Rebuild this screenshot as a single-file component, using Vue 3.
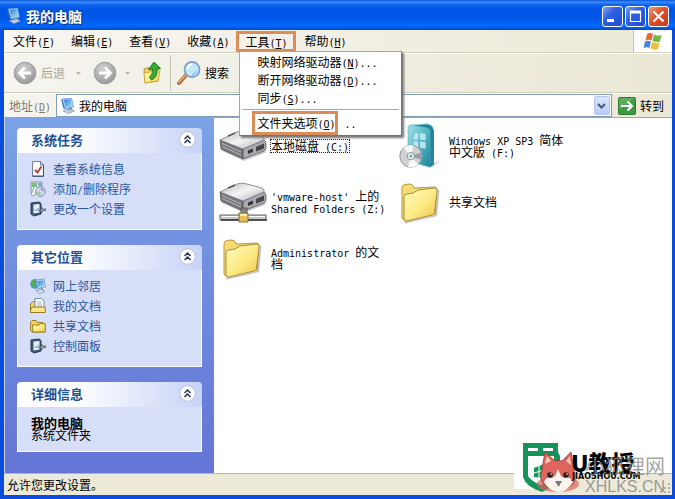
<script setup>
import { h } from 'vue'

// Splits a label into CJK and Latin runs; "&" marks the underlined access key.
const Label = (props) =>
  h('span', { class: 'xp-label' },
    props.text.split(/([\x20-\x7e]+)/).filter(Boolean).map((run) => {
      if (!/^[\x20-\x7e]/.test(run)) return run
      const i = run.indexOf('&')
      if (i < 0) return h('span', { class: 'xp-latin' }, run)
      return h('span', { class: 'xp-latin' }, [run.slice(0, i), h('u', run[i + 1]), run.slice(i + 2)])
    })
  )
Label.props = ['text']

const menusBefore = ['文件(&F)', '编辑(&E)', '查看(&V)', '收藏(&A)']
const toolItems = ['映射网络驱动器(&N)...', '断开网络驱动器(&D)...', '同步(&S)...']
const tasks = [
  { icon: 'info', text: '查看系统信息' },
  { icon: 'programs', text: '添加/删除程序' },
  { icon: 'settings', text: '更改一个设置' }
]
const places = [
  { icon: 'network', text: '网上邻居' },
  { icon: 'docs', text: '我的文档' },
  { icon: 'folder', text: '共享文档' },
  { icon: 'settings', text: '控制面板' }
]
const panels = [
  { title: '系统任务', links: tasks },
  { title: '其它位置', links: places },
  { title: '详细信息', links: null }
]
const files = [
  { icon: 'disk', lines: ['本地磁盘 (C:)'], focus: true },
  { icon: 'box', lines: ['Windows XP SP3 简体', '中文版 (F:)'] },
  { icon: 'netdisk', lines: ["'vmware-host' 上的", 'Shared Folders (Z:)'] },
  { icon: 'bigfolder', lines: ['共享文档'] },
  { icon: 'bigfolder', lines: ['Administrator 的文', '档'] }
]
</script>

<template>
  <div class="window">
    <svg class="defs" width="0" height="0" aria-hidden="true">
      <defs>
        <linearGradient id="gFolder" x1="0" y1="0" x2="1" y2="1">
          <stop offset="0" stop-color="#fffbc0" /><stop offset="0.5" stop-color="#fdec88" /><stop offset="1" stop-color="#efc548" />
        </linearGradient>
        <linearGradient id="gScreen" x1="0" y1="0" x2="1" y2="1">
          <stop offset="0" stop-color="#2b7fd8" /><stop offset="1" stop-color="#a9e0fb" />
        </linearGradient>
        <linearGradient id="gDiskTop" x1="0" y1="0" x2="1" y2="1">
          <stop offset="0" stop-color="#b9b9be" /><stop offset="0.5" stop-color="#f4f4f6" /><stop offset="1" stop-color="#b0b0b5" />
        </linearGradient>
        <linearGradient id="gBox" x1="0" y1="0" x2="1" y2="1">
          <stop offset="0" stop-color="#a3dfe6" /><stop offset="0.5" stop-color="#55b6c6" /><stop offset="1" stop-color="#1d8399" />
        </linearGradient>
        <radialGradient id="gRound" cx="0.4" cy="0.3" r="0.8">
          <stop offset="0" stop-color="#d2d2d2" /><stop offset="1" stop-color="#939393" />
        </radialGradient>
        <symbol id="computer" viewBox="0 0 16 16">
          <path d="M2 1 L11.500 0 L13.500 9 L5 11 Z" fill="#b9d6f2" stroke="#5b95d4" stroke-width=".7" />
          <path d="M3.800 1.700 L10.700 1 L12.300 8.300 L5.500 9.600 Z" fill="url(#gScreen)" />
          <path d="M2 1 L5 11 L3.500 10.500 L1.200 2Z" fill="#3b6fb2" />
          <path d="M8 10 L12 9.300 L12.500 12 L8.500 12.500 Z" fill="#6e98c6" />
          <path d="M3 12.700 L10 11 L14.500 13 L8 15.600 Z" fill="#dbe4ec" stroke="#718ba8" stroke-width=".7" />
          <path d="M6 13 L10.500 12 M8 14 L12 13" stroke="#90a8bd" stroke-width=".6" />
        </symbol>
        <symbol id="info" viewBox="0 0 16 16">
          <path d="M2.500 .5 H10.500 L13.500 3.500 V15 H2.500 Z" fill="#fafaff" stroke="#7182a2" />
          <path d="M10.500 .5 V4 H13.500" fill="#c6d3e8" stroke="#7182a2" />
          <path d="M13.500 4 V15.300 H2.500" fill="none" stroke="#35496f" />
          <path d="M5 9 L7.500 11.500 L11.500 5.500" fill="none" stroke="#b5433a" stroke-width="2" />
        </symbol>
        <symbol id="programs" viewBox="0 0 16 16">
          <path d="M1 1 H12 V12 H1 Z" fill="#d9e5ee" stroke="#8797ad" />
          <path d="M2 2 H7 V6 H2Z" fill="#79bf70" /><path d="M8 2 H12 V5 H8Z" fill="#88a7d8" />
          <path d="M1 14 L5 5 L8 7 L4 15 Z" fill="#fff" stroke="#7c96ae" stroke-width=".8" />
          <circle cx="10.500" cy="10.500" r="4.700" fill="#d6e1f3" stroke="#7683a9" />
          <path d="M10.500 6 A4.500 4.500 0 0 1 15 10 L10.500 10.500Z" fill="#b8a7d8" />
          <path d="M10.500 15 A4.500 4.500 0 0 1 6 11 L10.500 10.500Z" fill="#a1d39e" />
          <circle cx="10.500" cy="10.500" r="1.400" fill="#fff" stroke="#7683a9" stroke-width=".6" />
        </symbol>
        <symbol id="settings" viewBox="0 0 16 16">
          <path d="M1 2 L9 1 L11 2.500 V13 L4 15 L1 13 Z" fill="#3e5877" stroke="#233c58" />
          <path d="M3.500 3.500 L9.500 3 V11.500 L3.500 12.500Z" fill="#e3effb" />
          <path d="M5 8.500 L6.300 10 L8.500 7" stroke="#5582b5" fill="none" />
          <path d="M8.500 9.500 L11.500 8 V6 L13 8 L16 8 V9.500 H13 L11.500 12 V10.500Z" fill="#8d9dad" stroke="#38495b" stroke-width=".6" />
        </symbol>
        <symbol id="network" viewBox="0 0 16 16">
          <circle cx="5" cy="6" r="4.800" fill="#4c9bd8" />
          <path d="M1 4 Q3 0 7 2 L5 5 L6 8 L4 10 L1 7Z" fill="#55ad57" />
          <path d="M6 2 L14 1 L15.500 9 L8 10.500Z" fill="#d5e4f2" stroke="#5b86b6" stroke-width=".7" />
          <path d="M7.200 3 L13.300 2.200 L14.500 8.200 L8.800 9.300Z" fill="url(#gScreen)" />
          <path d="M11 10 L13 9.500 V12 H11Z" fill="#7f99b5" />
          <path d="M6 12.500 L12 11.500 L15 13.500 L9 15.500Z" fill="#e5ebf1" stroke="#647f9e" stroke-width=".7" />
        </symbol>
        <symbol id="docs" viewBox="0 0 16 16">
          <path d="M.5 6 L3 3.500 H5 V14.500 H.5Z" fill="#f7d567" stroke="#9b7c26" />
          <path d="M5 .5 H11.500 L14 3 V12 H5 Z" fill="#fff" stroke="#6f8eae" />
          <path d="M7 4 H11 M7 6 H12 M7 8 H12" stroke="#8db1d2" />
          <path d="M2.500 9 H15.300 V14.500 H.5 V12Z" fill="#fbe48c" stroke="#9b7c26" />
        </symbol>
        <symbol id="folder" viewBox="0 0 16 16">
          <path d="M.6 4 L2 2.500 H6 L7.500 4.500 H13 L14 6 V14 H2 L.6 12.500Z" fill="#f5d25c" stroke="#9c7b22" />
          <path d="M2.500 7 H9 L10.500 5.800 H15.300 V14 H3Z" fill="url(#gFolder)" stroke="#9c7b22" />
        </symbol>
        <symbol id="bigfolder" viewBox="0 0 48 48">
          <path d="M7 44 L38 37 L41 12 L42.500 12 L40 38 L8 45.500Z" fill="#888" opacity=".5" />
          <path d="M5 10 Q5 7 8 6.500 L13 6 Q16 6 17 10 L38 9 Q40 9 40 12 L38 36 L8 43 L5 40 Z" fill="#f5dc74" stroke="#b79743" />
          <path d="M7 19 Q7 16 10 16 L16 15 L21 12 L38 10 Q40.500 10 40 13 L37.500 35 Q37 37 35 37 L10 43 Q7 43.500 7 41Z" fill="url(#gFolder)" stroke="#a98d3c" />
        </symbol>
        <symbol id="disk" viewBox="0 0 48 40">
          <path d="M2 20 L24 31 L47 21 L46 27 L25 35 L3 25Z" fill="#777" opacity=".35" />
          <path d="M1 14 L24 23 V33 L2 23Z" fill="#77777d" stroke="#4c4c51" stroke-width=".7" />
          <path d="M24 23 L45 14 Q47 15 47 18 V22 Q47 24 45 25 L24 33Z" fill="#a8a8ae" stroke="#4c4c51" stroke-width=".7" />
          <path d="M1 14 L18 6 Q23 4 28 6 L43 10 Q46 12 45 14 L24 23Z" fill="url(#gDiskTop)" stroke="#77777c" stroke-width=".8" />
          <path d="M3 17.500 L22 26 M3 20.500 L22 29" stroke="#b8b8bd" />
          <path d="M9 10 L16 7" stroke="#555" stroke-width="1.500" />
          <path d="M29 24.500 L34 22.500 V26 L29 28Z" fill="#37373d" />
          <path d="M37 21 L45 17.500 V22.500 L37 25.500Z" fill="#45454b" />
          <path d="M27 27 V30" stroke="#9bd184" stroke-width="1.500" />
        </symbol>
        <symbol id="netdisk" viewBox="0 0 48 44">
          <use href="#disk" x="0" y="-2" width="48" height="40" />
          <path d="M22 28 H28 V36 H22Z" fill="#85858a" stroke="#444" stroke-width=".7" />
          <path d="M1 35 H47 V40 H1Z" fill="#c6c9cb" stroke="#65686c" />
          <path d="M2 40 H48" stroke="#303438" stroke-width="1.500" /><path d="M3 36.500 H46" stroke="#fff" />
          <path d="M20 33 H29 V42 H20Z" fill="#e3bf59" stroke="#88702d" />
          <path d="M21 35 H28" stroke="#fff2ad" stroke-width="2" />
        </symbol>
        <symbol id="box" viewBox="0 0 48 52">
          <path d="M37 45 L46 41 L37 49 L20 46Z" fill="#888" opacity=".3" />
          <path d="M10 5 Q11 3 14 3 L34 6 V49 L10 42Z" fill="url(#gBox)" stroke="#58a9b8" stroke-width=".7" />
          <path d="M14 3 L31 2 Q37 3 38 9 V46 L34 49 V9 Q33 6 30 6Z" fill="#1d8599" />
          <path d="M14 3 L31 2 Q37 3 38 9" fill="none" stroke="#a6e4ec" />
          <path d="M17 13 L21 12 V19 L16 19Z M23 12 L29 13 V20 L23 19Z M16 21 H21 V28 L16 26Z M23 21 L29 22 V29 L23 28Z" fill="#c9eff2" opacity=".85" />
          <circle cx="13" cy="37" r="12" fill="#cfd2d4" stroke="#8d9194" />
          <path d="M13 37 L5 28 A12 12 0 0 1 16 25.500Z M13 37 L21 46 A12 12 0 0 1 10 48.500Z" fill="#f9f9fa" />
          <path d="M13 37 L24 33 A12 12 0 0 1 24 41Z" fill="#9a9ea2" />
          <circle cx="13" cy="37" r="4" fill="#e9f2f3" stroke="#8b8f92" /><circle cx="13" cy="37" r="1.500" fill="#5aa6b7" />
        </symbol>
      </defs>
    </svg>

    <header class="titlebar">
      <svg class="i16"><use href="#computer" /></svg>
      <h1>我的电脑</h1>
      <div class="controls">
        <button class="ctl" aria-label="最小化"><svg viewBox="0 0 19 19"><path d="M4 13.500 H11" stroke="#fff" stroke-width="3" /></svg></button>
        <button class="ctl" aria-label="最大化"><svg viewBox="0 0 19 19"><path d="M4.500 5 H14.500 V14.500 H4.500Z" fill="none" stroke="#fff" stroke-width="1.200" /><path d="M4 5 H15" stroke="#fff" stroke-width="3" /></svg></button>
        <button class="ctl close" aria-label="关闭"><svg viewBox="0 0 19 19"><path d="M4.500 4.500 L14.500 14.500 M14.500 4.500 L4.500 14.500" stroke="#fff" stroke-width="2.200" /></svg></button>
      </div>
    </header>

    <div class="frame">
      <nav class="menubar">
        <button v-for="m in menusBefore" :key="m" class="menu"><Label :text="m" /></button>
        <div class="menu-wrap">
          <button class="menu marked"><Label text="工具(&T)" /></button>
          <div class="dropdown">
            <button v-for="t in toolItems" :key="t" class="entry"><Label :text="t" /></button>
            <hr>
            <button class="entry options"><span class="mark"><Label text="文件夹选项(&O)" /></span><Label text=".." /></button>
          </div>
        </div>
        <button class="menu"><Label text="帮助(&H)" /></button>
        <div class="flag">
          <svg viewBox="0 0 20 18" width="20" height="18">
            <path d="M4 2 Q7 0 10 2 L8.500 8.500 Q5.500 7 2.500 8.500Z" fill="#e8683a" />
            <path d="M11 2.500 Q14 4.500 18.500 3 L17 9.500 Q13 11 9.500 9Z" fill="#75b843" />
            <path d="M2 9.500 Q5 8 8 9.500 L6.500 16 Q4 14.500 .5 16Z" fill="#4386dc" />
            <path d="M9.200 10 Q12.500 12 16.700 10.500 L15 17 Q11 18.500 7.600 16.500Z" fill="#f2bd37" />
          </svg>
        </div>
      </nav>

      <div class="toolbar">
        <button class="tool disabled">
          <svg viewBox="0 0 24 24" width="24" height="24"><circle cx="12" cy="12" r="10.800" fill="url(#gRound)" stroke="#9c9c9c" /><path d="M18 12 H7 M12 6.500 L6.500 12 L12 17.500" fill="none" stroke="#fff" stroke-width="2.800" /></svg>
          <span>后退</span>
        </button>
        <button class="caret" aria-label="后退列表"><svg viewBox="0 0 5 3" width="5" height="3"><path d="M0 0 H5 L2.500 3Z" fill="#bbb8aa" /></svg></button>
        <button class="tool forward" aria-label="前进">
          <svg viewBox="0 0 24 24" width="24" height="24"><circle cx="12" cy="12" r="10.800" fill="url(#gRound)" stroke="#9c9c9c" /><path d="M6 12 H17 M12 6.500 L17.500 12 L12 17.500" fill="none" stroke="#fff" stroke-width="2.800" /></svg>
        </button>
        <button class="caret" aria-label="前进列表"><svg viewBox="0 0 5 3" width="5" height="3"><path d="M0 0 H5 L2.500 3Z" fill="#bbb8aa" /></svg></button>
        <button class="tool up" aria-label="向上">
          <svg viewBox="0 0 22 24" width="22" height="24">
            <path d="M2 8 L6 6.500 L8 8 L16 7 L16 20 L3 22Z" fill="#ecd05e" stroke="#b49a38" />
            <path d="M2 12 L8 11 L10 9 L18 9 L16 20 L3 22Z" fill="url(#gFolder)" stroke="#c4aa43" />
            <path d="M12 1 L18.500 7.500 L15 7.500 Q16 16 9.500 19 L7.500 16 Q11 14 10.500 8 L6.500 8.500Z" fill="#3bac36" stroke="#187d1e" />
          </svg>
        </button>
        <i class="sep"></i>
        <button class="tool search">
          <svg viewBox="0 0 24 24" width="24" height="24">
            <path d="M2 22 L9.500 13.500" stroke="#a96d3a" stroke-width="4" stroke-linecap="round" /><path d="M2 21 L9 13.500" stroke="#ebb07a" stroke-width="1.800" stroke-linecap="round" />
            <circle cx="15" cy="8.500" r="7.500" fill="#c5e7fa" stroke="#7ca3cd" stroke-width="1.800" />
            <path d="M10.500 8 Q11 4 15 3.500" stroke="#fff" stroke-width="2" fill="none" /><path d="M19 10 Q18 13 15 14" stroke="#8dc9ed" stroke-width="1.500" fill="none" />
          </svg>
          <span>搜索</span>
        </button>
      </div>

      <div class="addressbar">
        <label for="address"><Label text="地址(&D)" /></label>
        <div class="field">
          <svg class="i16"><use href="#computer" /></svg>
          <input id="address" type="text" value="我的电脑">
          <button class="drop" aria-label="展开地址"><svg viewBox="0 0 9 6" width="9" height="6"><path d="M1 1 L4.500 4.500 L8 1" fill="none" stroke="#41597e" stroke-width="2" /></svg></button>
        </div>
        <button class="go">
          <svg viewBox="0 0 18 18" width="18" height="18"><rect x=".5" y=".5" width="17" height="17" rx="1" fill="#3d9a3f" stroke="#2b7b30" /><path d="M1 1 H17 L1 13Z" fill="#7bc077" opacity=".5" /><path d="M3 9 H14 M9.500 4.500 L14 9 L9.500 13.500" fill="none" stroke="#fff" stroke-width="2" /></svg>
          <span>转到</span>
        </button>
      </div>

      <div class="body">
        <aside>
          <section v-for="p in panels" :key="p.title" class="panel">
            <div class="panel-head">
              <h2>{{ p.title }}</h2>
              <button class="fold" aria-label="折叠"><svg viewBox="0 0 17 17" width="17" height="17"><circle cx="8.500" cy="8.500" r="7.800" fill="#fff" stroke="#b6bdd2" /><path d="M5.500 8 L8.500 5 L11.500 8 M5.500 12 L8.500 9 L11.500 12" fill="none" stroke="#27335c" stroke-width="1.500" /></svg></button>
            </div>
            <ul v-if="p.links" class="links">
              <li v-for="l in p.links" :key="l.text">
                <a href="#"><svg class="i16"><use :href="'#' + l.icon" /></svg><Label :text="l.text" /></a>
              </li>
            </ul>
            <div v-else class="details"><strong>我的电脑</strong><span>系统文件夹</span></div>
          </section>
        </aside>
        <main>
          <div v-for="(f, i) in files" :key="i" class="file">
            <svg class="i48"><use :href="'#' + f.icon" /></svg>
            <div class="name" :class="{ focus: f.focus }">
              <Label v-for="line in f.lines" :key="line" :text="line" />
            </div>
          </div>
        </main>
      </div>

      <footer class="status">允许您更改设置。</footer>
    </div>

    <div class="marks">
      <div class="paper"></div>
      <svg class="emblem" viewBox="0 0 66 52" width="66" height="52">
        <path d="M9 1 H44 V10 L46 14 V36 Q42 44 28 50 Q12 45 9 35Z" fill="#16935a" />
        <path d="M14 6 H24 V9 H14Z M29 6 H39 V9 H29Z M14 14 H40 V34 Q37 39 27 43 Q17 39 14 34Z" fill="#fff" />
        <path d="M20 26 L30 22 V36 L20 35Z" fill="#16935a" />
        <path d="M20 31 L30 28 M25 24 V36" stroke="#fff" />
        <ellipse cx="44" cy="42" rx="21" ry="8" fill="#df655c" opacity=".7" />
        <path d="M28 27 L31 10 L41 19 Q44 18 48 19 L57 10 L60 28 Q64 41 55 45 Q44 52 33 45 Q24 40 28 27Z" fill="#df655c" stroke="#8e3d3b" stroke-width=".8" />
        <path d="M31 22 L33 14 L37 19Z M52 19 L56 14 L57 23Z" fill="#fbc8bc" />
        <path d="M30 40 Q32 34 38 36 L41 34 L44 27 L47 34 L50 36 Q57 34 59 40 Q53 50 44 50 Q35 49 30 40Z" fill="#fff4ee" />
        <circle cx="36" cy="33" r="2.800" fill="#30201f" /><circle cx="52" cy="33" r="2.800" fill="#30201f" />
        <circle cx="37" cy="32" r=".8" fill="#fff" /><circle cx="53" cy="32" r=".8" fill="#fff" />
        <path d="M41 39 H48 L44.500 45Z" fill="#777" />
      </svg>
      <span class="brand">U教授</span>
      <span class="brand-url">JIAOSHOU.COM</span>
      <span class="site">小狐狸网</span>
      <span class="site-url">XHLKS.CN</span>
      <svg class="grip" viewBox="0 0 12 12" width="12" height="12"><path d="M9 1h2v2h-2z M5 5h2v2h-2z M9 5h2v2h-2z M1 9h2v2h-2z M5 9h2v2h-2z M9 9h2v2h-2z" fill="#b8b4a2" /></svg>
    </div>
  </div>
</template>

<style>
body { overflow: hidden; }
.xp-label { white-space: pre; }
.xp-latin { font-family: "DejaVu Sans Mono", "Liberation Mono", monospace; font-size: 10px; line-height: 1px; }
.xp-latin u { text-underline-offset: 1px; }
</style>

<style scoped>
* { box-sizing: border-box; }
.window {
  position: relative; display: flex; flex-direction: column; height: 100vh;
  background: #0a4be0; color: #000;
  font: 12px/12px "Noto Sans CJK SC", sans-serif;
}
.defs { position: absolute; }
button { font: inherit; color: inherit; background: none; border: 0; padding: 0; margin: 0; }
h1, h2, ul { margin: 0; padding: 0; list-style: none; }
.i16 { width: 16px; height: 16px; flex: none; }
.i48 { width: 48px; height: 48px; flex: none; }

.titlebar {
  display: flex; align-items: center; gap: 4px; height: 30px; flex: none; padding: 2px 6px 0 6px;
  background: linear-gradient(#0b50d5 0, #3a8cf8 2px, #0a62ee 5px, #0054e2 10px, #0058ea 18px, #0468fe 26px, #0348ca 30px);
}
h1 { font-size: 14px; line-height: 20px; color: #fff; text-shadow: 1px 1px 1px #062d80; }
.controls { display: flex; gap: 2px; margin-left: auto; }
.ctl {
  width: 21px; height: 21px; border: 1px solid #fff; border-radius: 3px;
  background: linear-gradient(135deg, #7da2f2, #2e5fe0 40%, #1f4fd0);
}
.ctl svg { display: block; width: 19px; height: 19px; }
.close { background: linear-gradient(135deg, #ee9a80, #dc5130 45%, #bd3a18); }

.frame { display: flex; flex-direction: column; flex: 1; min-height: 0; margin: 0 3px 4px 4px; background: #efecdf; }
.menubar {
  display: flex; align-items: stretch; height: 23px; flex: none; padding-left: 1px;
  border-bottom: 1px solid #d5d1bf; background: linear-gradient(90deg, #f7f6f1, #ece9d8);
}
.menu { height: 22px; padding: 0 8px; }
.menu-wrap { position: relative; }
.marked { width: 60px; margin: 1px 0 0 -1px; height: 21px; padding: 0; border: 3px solid #db8c59; }
.flag {
  display: flex; align-items: center; justify-content: center; width: 39px; margin-left: auto;
  background: #fff; border-left: 1px solid #c4c1b2;
}
.dropdown {
  position: absolute; z-index: 2; top: 21px; left: 2px; width: 163px; padding: 1px 2px 0;
  background: #fff; border: 1px solid #aca899; border-right-color: #77756b; border-bottom-color: #77756b;
  box-shadow: 2px 2px 2px #777;
}
.entry { display: flex; align-items: center; height: 18px; width: 100%; padding-left: 15px; }
.dropdown hr { margin: 2px 0 1px; border: 0; border-top: 1px solid #aca899; }
.options { height: 24px; padding-left: 10px; gap: 6px; }
.mark { display: flex; align-items: center; height: 24px; width: 86px; padding-left: 2px; border: 3px solid #db8c59; }

.toolbar {
  display: flex; align-items: center; height: 40px; flex: none; padding-left: 9px;
  border-top: 1px solid #fff; border-bottom: 1px solid #cfcbb9; background: linear-gradient(90deg, #f5f4ee, #ebe8d7);
}
.tool { display: flex; align-items: center; gap: 4px; }
.disabled { color: #a9a697; }
.caret { display: flex; width: 5px; margin: 0 12px 0 11px; }
.forward + .caret { margin: 0 12px 0 8px; }
.sep { width: 1px; height: 36px; margin: 0 6px; background: #c9c6b6; }

.addressbar {
  display: flex; align-items: center; height: 24px; flex: none; padding: 0 8px 0 5px;
  border-top: 1px solid #fff; background: linear-gradient(90deg, #f5f4ee, #ebe8d7);
}
.addressbar label { width: 47px; color: #7d7b70; }
.field {
  display: flex; align-items: center; flex: 1; height: 23px; padding: 0 1px 0 3px; gap: 3px;
  background: #fff; border: 1px solid #7f9db9;
}
.field input {
  flex: 1; min-width: 0; height: 20px; padding: 0; border: 0; outline: 0; background: none;
  font: inherit; color: #000;
}
.drop {
  display: flex; align-items: center; justify-content: center; width: 16px; height: 19px;
  border: 1px solid #b5c8f4; border-radius: 2px; background: linear-gradient(#dbe5fd, #b7cbf6);
}
.go { display: flex; align-items: center; gap: 4px; margin-left: 6px; }

.body { display: flex; flex: 1; min-height: 0; }
aside {
  display: flex; flex-direction: column; gap: 15px; width: 210px; flex: none; padding: 11px 12px 0;
  border-left: 1px solid #c8d5f5; background: linear-gradient(#7ba2e7, #6375d6);
}
.panel-head {
  display: flex; align-items: center; justify-content: space-between; height: 25px; padding: 0 6px 2px 14px;
  border-radius: 4px 4px 0 0; background: linear-gradient(90deg, #fff 30%, #c7d3f7);
}
h2 { font-size: 13px; line-height: 16px; color: #215097; }
.fold { display: flex; }
.links, .details { background: #d6dff7; border: 1px solid #fff; border-top: 0; }
.links { padding: 6px 12px 10px; }
.links a { display: flex; align-items: center; height: 20px; gap: 7px; color: #2b559f; text-decoration: none; }
.details { display: flex; flex-direction: column; padding: 10px 13px; }
.details strong { font-size: 13px; line-height: 12px; }
main {
  display: grid; grid-template-columns: repeat(auto-fill, 178px); grid-auto-rows: 56px; align-content: start;
  flex: 1; min-width: 0; padding: 0 80px 0 5px; background: #fff; border-top: 1px solid #a3a3a0;
}
.file { display: flex; align-items: center; gap: 4px; }
.name { display: flex; flex-direction: column; }
.focus { outline: 1px dotted #222; }

.status { height: 22px; flex: none; padding: 5px 3px; border-top: 1px solid #b8b5a7; background: #ece9d8; }

.marks { position: absolute; right: 0; bottom: 0; width: 165px; height: 60px; pointer-events: none; }
.marks > * { position: absolute; white-space: nowrap; }
.paper { left: 4px; top: 4px; width: 44px; height: 46px; background: #fff; }
.emblem { left: 4px; top: 3px; }
.brand { left: 61px; top: 11px; font: 900 23px/24px "Noto Sans CJK SC", sans-serif; }
.brand-url { left: 62px; top: 33px; font: bold 8px/10px "DejaVu Sans", sans-serif; }
.site { left: 75px; top: 16px; font-size: 20px; line-height: 22px; color: #8c8c8ccc; }
.site-url { left: 75px; top: 38px; font: 16px/20px "Liberation Sans", sans-serif; color: #8c8c8ce0; }
.grip { right: 4px; bottom: 5px; }
</style>
